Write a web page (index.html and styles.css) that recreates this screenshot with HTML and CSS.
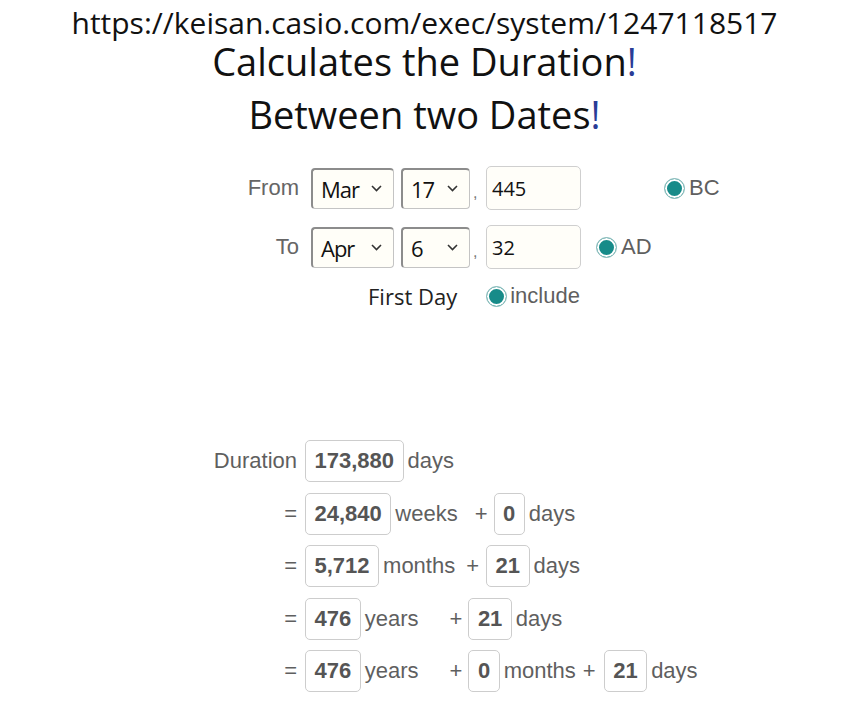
FILE: index.html
```html
<!DOCTYPE html>
<html lang="en">
<head>
<meta charset="utf-8">
<title>Calculates the Duration Between two Dates</title>
<link rel="stylesheet" href="styles.css">
</head>
<body>
<header class="head">
  <div class="url">https://keisan.casio.com/exec/system/1247118517</div>
  <h1 class="title">Calculates the Duration<span class="bang">!</span></h1>
  <h2 class="title sub">Between two Dates<span class="bang">!</span></h2>
</header>

<section class="form">
  <div class="frow">
    <span class="lbl">From</span>
    <div class="sel sel-month"><span>Mar</span><svg class="chev" width="11" height="7" viewBox="0 0 11 7"><polyline points="1,1 5.5,5.5 10,1" fill="none" stroke="#333" stroke-width="1.6"/></svg></div>
    <div class="sel sel-day"><span>17</span><svg class="chev" width="11" height="7" viewBox="0 0 11 7"><polyline points="1,1 5.5,5.5 10,1" fill="none" stroke="#333" stroke-width="1.6"/></svg></div>
    <span class="comma">,</span>
    <input class="year" type="text" value="445">
    <label class="era era-bc"><span class="radio"></span><span>BC</span></label>
  </div>
  <div class="frow">
    <span class="lbl">To</span>
    <div class="sel sel-month"><span>Apr</span><svg class="chev" width="11" height="7" viewBox="0 0 11 7"><polyline points="1,1 5.5,5.5 10,1" fill="none" stroke="#333" stroke-width="1.6"/></svg></div>
    <div class="sel sel-day"><span>6</span><svg class="chev" width="11" height="7" viewBox="0 0 11 7"><polyline points="1,1 5.5,5.5 10,1" fill="none" stroke="#333" stroke-width="1.6"/></svg></div>
    <span class="comma">,</span>
    <input class="year" type="text" value="32">
    <label class="era era-ad"><span class="radio"></span><span>AD</span></label>
  </div>
  <div class="frow frow-first">
    <span class="first">First Day</span>
    <label class="era era-inc"><span class="radio"></span><span>include</span></label>
  </div>
</section>

<section class="results">
  <span class="rl">Duration</span>
  <div class="rr"><span class="box">173,880</span><span class="unit">days</span></div>

  <span class="rl">=</span>
  <div class="rr"><span class="box">24,840</span><span class="unit">weeks</span><span class="op op-weeks">+</span><span class="box">0</span><span class="unit">days</span></div>

  <span class="rl">=</span>
  <div class="rr"><span class="box">5,712</span><span class="unit">months</span><span class="op">+</span><span class="box">21</span><span class="unit">days</span></div>

  <span class="rl">=</span>
  <div class="rr"><span class="box">476</span><span class="unit">years</span><span class="op op-years">+</span><span class="box">21</span><span class="unit">days</span></div>

  <span class="rl">=</span>
  <div class="rr"><span class="box">476</span><span class="unit">years</span><span class="op op-years">+</span><span class="box">0</span><span class="unit">months</span><span class="op op-tight">+</span><span class="box">21</span><span class="unit">days</span></div>
</section>
</body>
</html>
```

FILE: styles.css
```css
* { box-sizing: border-box; }

body {
  margin: 0;
  background: #ffffff;
  font-family: "Liberation Sans", Arial, sans-serif;
  color: #5f5f5f;
}

.head {
  text-align: center;
  font-family: "Open Sans", "Noto Sans", sans-serif;
  color: #111;
}

.url {
  padding-top: 7px;
  font-size: 30px;
  line-height: 32px;
}

.title {
  margin: 0;
  font-size: 38px;
  line-height: 44px;
  font-weight: 400;
}

.title.sub {
  margin-top: 8.5px;
}

.bang {
  color: #2a3c96;
}

/* ---------- form ---------- */
.form {
  margin-top: 30.5px;
  padding-left: 230px;
  display: flex;
  flex-direction: column;
}

.frow {
  display: flex;
  align-items: center;
  height: 44px;
}

.frow + .frow {
  margin-top: 15px;
}

.frow.frow-first {
  margin-top: 12px;
  height: 30px;
  padding-left: 138px;
}

.lbl {
  width: 69px;
  text-align: right;
  font-size: 22px;
  color: #666;
  margin-right: 12px;
}

.sel {
  height: 41px;
  display: flex;
  align-items: center;
  justify-content: space-between;
  padding: 0 11px 0 8px;
  background: #fffef8;
  border: 1px solid #c4c4c4;
  border-top: 2px solid #8c8c8c;
  border-left: 2px solid #8c8c8c;
  border-radius: 4px;
  font-family: "Open Sans", "Noto Sans", sans-serif;
  font-size: 22px;
  color: #111;
}

.sel span {
  letter-spacing: -1px;
}

.sel-month { width: 83px; }
.sel-day { width: 69px; margin-left: 7px; }

.chev { display: block; }

.comma {
  width: 16px;
  padding-left: 3px;
  font-size: 16px;
  color: #777;
  margin-top: 10px;
}

.year {
  width: 95px;
  height: 44px;
  padding: 0 0 0 5px;
  border: 1px solid #cfcfcf;
  border-radius: 5px;
  background: #fffef9;
  font-family: "Open Sans", "Noto Sans", sans-serif;
  font-size: 20px;
  color: #111;
  outline: none;
}

.era {
  display: flex;
  align-items: center;
  gap: 4px;
  font-size: 22px;
  color: #5f5f5f;
}

.era-bc { margin-left: 83px; }
.era-ad { margin-left: 15px; }
.era-inc { margin-left: 29px; gap: 3px; }

.radio {
  width: 21px;
  height: 21px;
  border-radius: 50%;
  border: 1px solid #92bfbf;
  background: #178b89;
  box-shadow: inset 0 0 0 2px #ffffff;
  flex: none;
}

.first {
  font-family: "Open Sans", "Noto Sans", sans-serif;
  font-size: 22px;
  color: #222;
}

/* ---------- results ---------- */
.results {
  margin-top: 129px;
  padding-left: 213px;
  display: grid;
  grid-template-columns: 84px auto;
  column-gap: 8px;
  row-gap: 10.5px;
  align-items: center;
  font-size: 22px;
  color: #5f5f5f;
}

.rl {
  text-align: right;
}

.rr {
  display: flex;
  align-items: center;
  height: 42px;
}

.box {
  height: 42px;
  display: flex;
  align-items: center;
  padding: 0 8.5px;
  border: 1px solid #cdcdcd;
  border-radius: 5px;
  font-weight: 700;
  color: #555;
  background: #fff;
}

.unit {
  margin-left: 4px;
}

.op {
  margin: 0 7px 0 11px;
}

.op-weeks { margin-left: 17px; margin-right: 6px; }
.op-years { margin-left: 31px; margin-right: 6px; }
.op-tight { margin-left: 7px; margin-right: 8px; }
```
